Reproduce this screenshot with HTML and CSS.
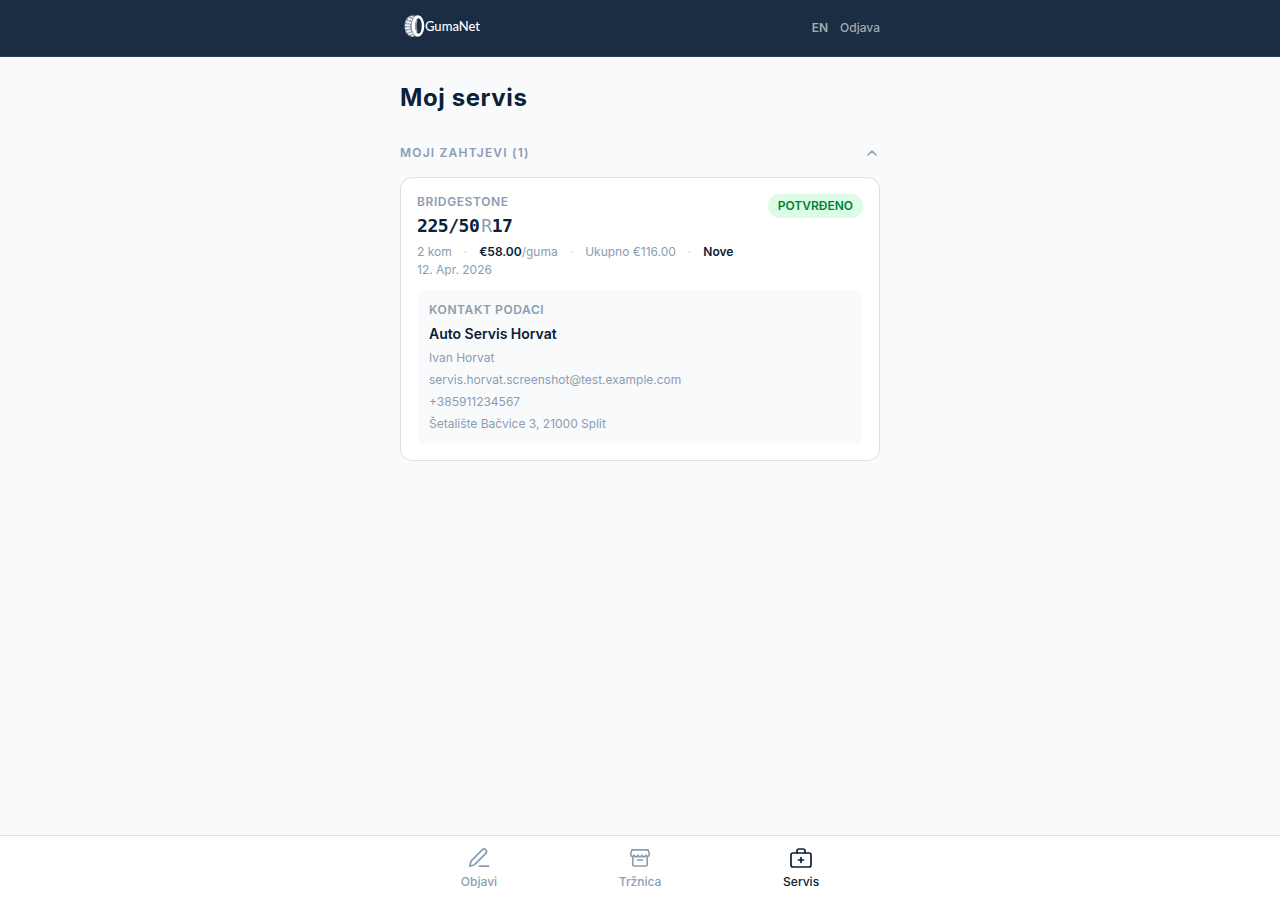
FILE: index.html
```html
<!DOCTYPE html>
<html lang="hr">
<head>
    <meta charset="UTF-8">
    <meta name="viewport" content="width=device-width, initial-scale=1.0">
    <title>GumaNet - Moj servis</title>
    <link rel="stylesheet" href="styles.css">
</head>
<body>
    <header class="topbar">
        <div class="topbar-inner">
            <a href="#" class="logo">
                <svg width="22" height="24" viewBox="0 0 22 24" fill="none" aria-hidden="true">
                    <path d="M9 1.500h6v21H9C4.500 22.500 1.500 18 1.500 12S4.500 1.500 9 1.500z" fill="#8d99a7"/>
                    <path d="M8 2l2 1.500M5 4.500l4 1.500M3 7.500l5 1.500M2 11l5 .5M2 14.500l5-.5M3 18l5-1.500M5.500 20.500l4-1.500M8.500 22.500l2-1.500" stroke="#fff" stroke-width="1.400"/>
                    <path d="M6.500 3C4 8 4 16 6.500 21" stroke="#dfe4e9" stroke-width=".8"/>
                    <ellipse cx="15" cy="12" rx="6.300" ry="10.700" fill="#fff"/>
                    <ellipse cx="15.500" cy="12" rx="3.300" ry="7.800" fill="#1b2d42"/>
                    <path d="M14 5.500c-1.300 4-1.300 9 0 13" stroke="#a9b4c0" stroke-width="1.200"/>
                </svg>
                <span>GumaNet</span>
            </a>
            <nav class="topbar-links">
                <a href="#" class="lang">EN</a>
                <a href="#">Odjava</a>
            </nav>
        </div>
    </header>

    <main class="container">
        <h1>Moj servis</h1>

        <button type="button" class="section-toggle" aria-expanded="true">
            <span>MOJI ZAHTJEVI (1)</span>
            <svg width="16" height="16" viewBox="0 0 16 16" fill="none" stroke="currentColor" stroke-width="1.600" stroke-linecap="round" stroke-linejoin="round" aria-hidden="true">
                <path d="M4 10l4-4 4 4"/>
            </svg>
        </button>

        <article class="card">
            <div class="card-head">
                <div>
                    <p class="label">BRIDGESTONE</p>
                    <p class="tire-size">225/50<span>R</span>17</p>
                </div>
                <span class="badge">POTVRĐENO</span>
            </div>
            <div class="meta">
                <span>2 kom</span>
                <span class="dot">·</span>
                <span><strong>€58.00</strong>/guma</span>
                <span class="dot">·</span>
                <span>Ukupno €116.00</span>
                <span class="dot">·</span>
                <strong>Nove</strong>
            </div>
            <p class="date">12. Apr. 2026</p>

            <div class="contact">
                <p class="label">KONTAKT PODACI</p>
                <p class="contact-name">Auto Servis Horvat</p>
                <p>Ivan Horvat</p>
                <a href="mailto:servis.horvat.screenshot@test.example.com">servis.horvat.screenshot@test.example.com</a>
                <a href="tel:+385911234567">+385911234567</a>
                <p>Šetalište Bačvice 3, 21000 Split</p>
            </div>
        </article>
    </main>

    <footer class="tabbar">
        <nav class="tabbar-inner">
            <a href="#" class="tab">
                <svg width="24" height="24" viewBox="0 0 24 24" aria-hidden="true">
                    <path d="M2.800 20.200l1.200-5L15.200 3.800a2.500 2.500 0 0 1 3.600 3.500L7.600 18.700z"/>
                    <path d="M12.500 20.200h9"/>
                </svg>
                <span>Objavi</span>
            </a>
            <a href="#" class="tab">
                <svg width="24" height="24" viewBox="0 0 24 24" aria-hidden="true">
                    <path d="M4 3.800h16l1.300 4.200v.8c0 1.800-2.700 2.200-3.500.4-.6 2.200-3.200 2.200-3.900 0-.6 2.200-3.200 2.200-3.900 0-.7 2.200-3.300 2.200-3.900 0-.7 1.800-3.400 1.400-3.400-.4V8z"/>
                    <path d="M4.800 11v7.700a1.300 1.300 0 0 0 1.300 1.300h11.800a1.300 1.300 0 0 0 1.300-1.300V11"/>
                    <path d="M9.500 14h5"/>
                </svg>
                <span>Tržnica</span>
            </a>
            <a href="#" class="tab active">
                <svg width="24" height="24" viewBox="0 0 24 24" aria-hidden="true">
                    <rect x="2" y="7" width="20" height="14" rx="2"/>
                    <path d="M8 7V5a2 2 0 0 1 2-2h4a2 2 0 0 1 2 2v2"/>
                    <path d="M12 11.500v5M9.500 14h5"/>
                </svg>
                <span>Servis</span>
            </a>
        </nav>
    </footer>
</body>
</html>
```
FILE: styles.css
```css
* {
    box-sizing: border-box;
}
body {
    margin: 0;
    min-height: 100vh;
    display: flex;
    flex-direction: column;
    font-family: Inter, sans-serif;
    font-size: 12px;
    line-height: 16px;
    color: #8b9db1;
    background-color: #f9fafc;
}
h1, p {
    margin: 0;
}
a {
    color: inherit;
    text-decoration: none;
}
strong {
    font-weight: 600;
    color: #0b2136;
}
.topbar {
    background-color: #1b2d42;
    border-bottom: 1px solid #2c3e54;
}
.topbar-inner,
.container,
.tabbar-inner {
    width: 100%;
    max-width: 480px;
    margin: 0 auto;
}
.topbar-inner {
    display: flex;
    justify-content: space-between;
    align-items: center;
    height: 56px;
}
.logo {
    display: flex;
    align-items: center;
    padding: 0 3px 4px;
    font-family: Lato, sans-serif;
    font-size: 13px;
    font-weight: 500;
    color: #fff;
}
.topbar-links {
    display: flex;
    gap: 12px;
    font-weight: 500;
    color: #a4abb4;
}
.lang {
    font-weight: 600;
}
.container {
    flex: 1;
    padding: 24px 0;
}
h1 {
    font-size: 24px;
    line-height: 34px;
    font-weight: 700;
    letter-spacing: 0.025em;
    color: #0b2136;
}
.section-toggle {
    display: flex;
    justify-content: space-between;
    align-items: center;
    width: 100%;
    margin: 30px 0 16px;
    padding: 0;
    border: none;
    background: none;
    font: inherit;
    font-weight: 600;
    letter-spacing: 0.1em;
    color: inherit;
    cursor: pointer;
}
.card {
    padding: 16px;
    background-color: #fff;
    border: 1px solid #d8e0ea;
    border-radius: 12px;
}
.card-head {
    display: flex;
    justify-content: space-between;
    align-items: flex-start;
    margin-bottom: 4px;
}
.label {
    font-weight: 600;
    letter-spacing: 0.05em;
}
.tire-size {
    margin-top: 2px;
    font-family: "DejaVu Sans Mono", monospace;
    font-size: 18px;
    line-height: 28px;
    font-weight: 700;
    letter-spacing: -0.025em;
    color: #0b2136;
}
.tire-size span {
    margin-left: 2px;
    font-weight: 400;
    color: #8b9db1;
}
.badge {
    padding: 4px 10px;
    border-radius: 12px;
    font-weight: 600;
    color: #008236;
    background-color: #dcfce7;
}
.meta {
    display: flex;
    flex-wrap: wrap;
    gap: 2px 12px;
    margin-bottom: 2px;
}
.dot {
    color: #c0cad6;
}
.contact {
    display: flex;
    flex-direction: column;
    align-items: flex-start;
    gap: 6px;
    margin-top: 12px;
    padding: 12px;
    border-radius: 8px;
    background-color: #f9fafc;
}
.contact-name {
    font-size: 14px;
    line-height: 20px;
    font-weight: 600;
    color: #0b2136;
}
.tabbar {
    position: sticky;
    bottom: 0;
    background-color: #fff;
    border-top: 1px solid #d8e0ea;
}
.tabbar-inner {
    display: flex;
    justify-content: space-around;
}
.tab {
    display: flex;
    flex-direction: column;
    align-items: center;
    gap: 4px;
    padding: 10px 12px;
    font-weight: 500;
}
.tab svg {
    fill: none;
    stroke: currentColor;
    stroke-width: 1.7;
    stroke-linecap: round;
    stroke-linejoin: round;
}
.tab.active {
    color: #0b2136;
}
```
